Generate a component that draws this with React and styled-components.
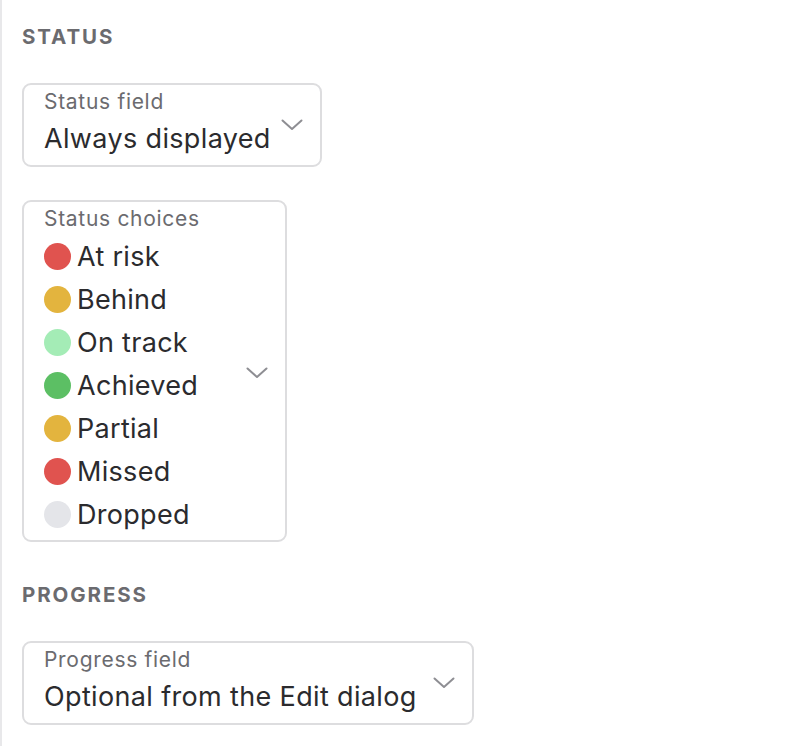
import React from "react";
import styled, { createGlobalStyle } from "styled-components";

const GlobalStyle = createGlobalStyle`
  html, body {
    margin: 0;
    background: #fff;
  }
  body {
    font-family: Inter, "Noto Sans", sans-serif;
    -webkit-font-smoothing: antialiased;
  }
`;

const Panel = styled.div`
  min-height: 746px;
  box-sizing: border-box;
  border-left: 2px solid #e8e8ea;
  padding: 25px 20px 0 20px;
  display: flex;
  flex-direction: column;
  align-items: flex-start;
`;

const Heading = styled.h3`
  margin: 0 0 34px;
  font-size: 20.5px;
  font-weight: 700;
  letter-spacing: 1.9px;
  color: #6b6b6f;
  line-height: 24px;
`;

const Field = styled.div`
  box-sizing: border-box;
  width: ${(p) => p.$width}px;
  border: 2px solid #dddddf;
  border-radius: 9px;
  padding: ${(p) => p.$pad};
  display: flex;
  align-items: center;
  justify-content: space-between;
  margin-bottom: ${(p) => p.$gap}px;
`;

const Body = styled.div`
  display: flex;
  flex-direction: column;
`;

const Label = styled.span`
  font-size: 21px;
  line-height: 24px;
  letter-spacing: 0.7px;
  color: #6b6b6f;
  margin-bottom: ${(p) => p.$after}px;
`;

const Value = styled.span`
  font-size: 27px;
  line-height: 34px;
  letter-spacing: 0.35px;
  color: #2b2b2e;
`;

const Choice = styled.div`
  display: flex;
  align-items: center;
  gap: 6px;
  font-size: 27px;
  line-height: 43px;
  letter-spacing: 0.3px;
  color: #2b2b2e;
`;

const Dot = styled.span`
  width: 27px;
  height: 27px;
  border-radius: 50%;
  background: ${(p) => p.$color};
  flex: none;
`;

const ChevronBox = styled.span`
  display: flex;
  margin-top: ${(p) => p.$shift}px;
`;

const Chevron = ({ shift = 0 }) => (
  <ChevronBox $shift={shift}>
    <svg width="22" height="12" viewBox="0 0 22 12" fill="none">
      <path
        d="M1.5 1.5 L11 10 L20.5 1.5"
        stroke="#8e8e93"
        strokeWidth="2"
        strokeLinecap="round"
        strokeLinejoin="round"
      />
    </svg>
  </ChevronBox>
);

const choices = [
  { name: "At risk", color: "#e0534f" },
  { name: "Behind", color: "#e3b43e" },
  { name: "On track", color: "#a4ecb6" },
  { name: "Achieved", color: "#5cbf64" },
  { name: "Partial", color: "#e3b43e" },
  { name: "Missed", color: "#e0534f" },
  { name: "Dropped", color: "#e4e5e9" },
];

export default function App() {
  return (
    <>
      <GlobalStyle />
      <Panel>
        <Heading>STATUS</Heading>
        <Field $width={300} $pad="5px 17px 9px 20px" $gap={33}>
          <Body>
            <Label $after={8}>Status field</Label>
            <Value>Always displayed</Value>
          </Body>
          <Chevron shift={4} />
        </Field>
        <Field $width={265} $pad="5px 17px 4px 20px" $gap={41}>
          <Body>
            <Label $after={4}>Status choices</Label>
            {choices.map((c) => (
              <Choice key={c.name}>
                <Dot $color={c.color} />
                {c.name}
              </Choice>
            ))}
          </Body>
          <Chevron shift={2} />
        </Field>
        <Heading>PROGRESS</Heading>
        <Field $width={452} $pad="5px 17px 9px 20px" $gap={0}>
          <Body>
            <Label $after={8}>Progress field</Label>
            <Value>Optional from the Edit dialog</Value>
          </Body>
          <Chevron shift={4} />
        </Field>
      </Panel>
    </>
  );
}
